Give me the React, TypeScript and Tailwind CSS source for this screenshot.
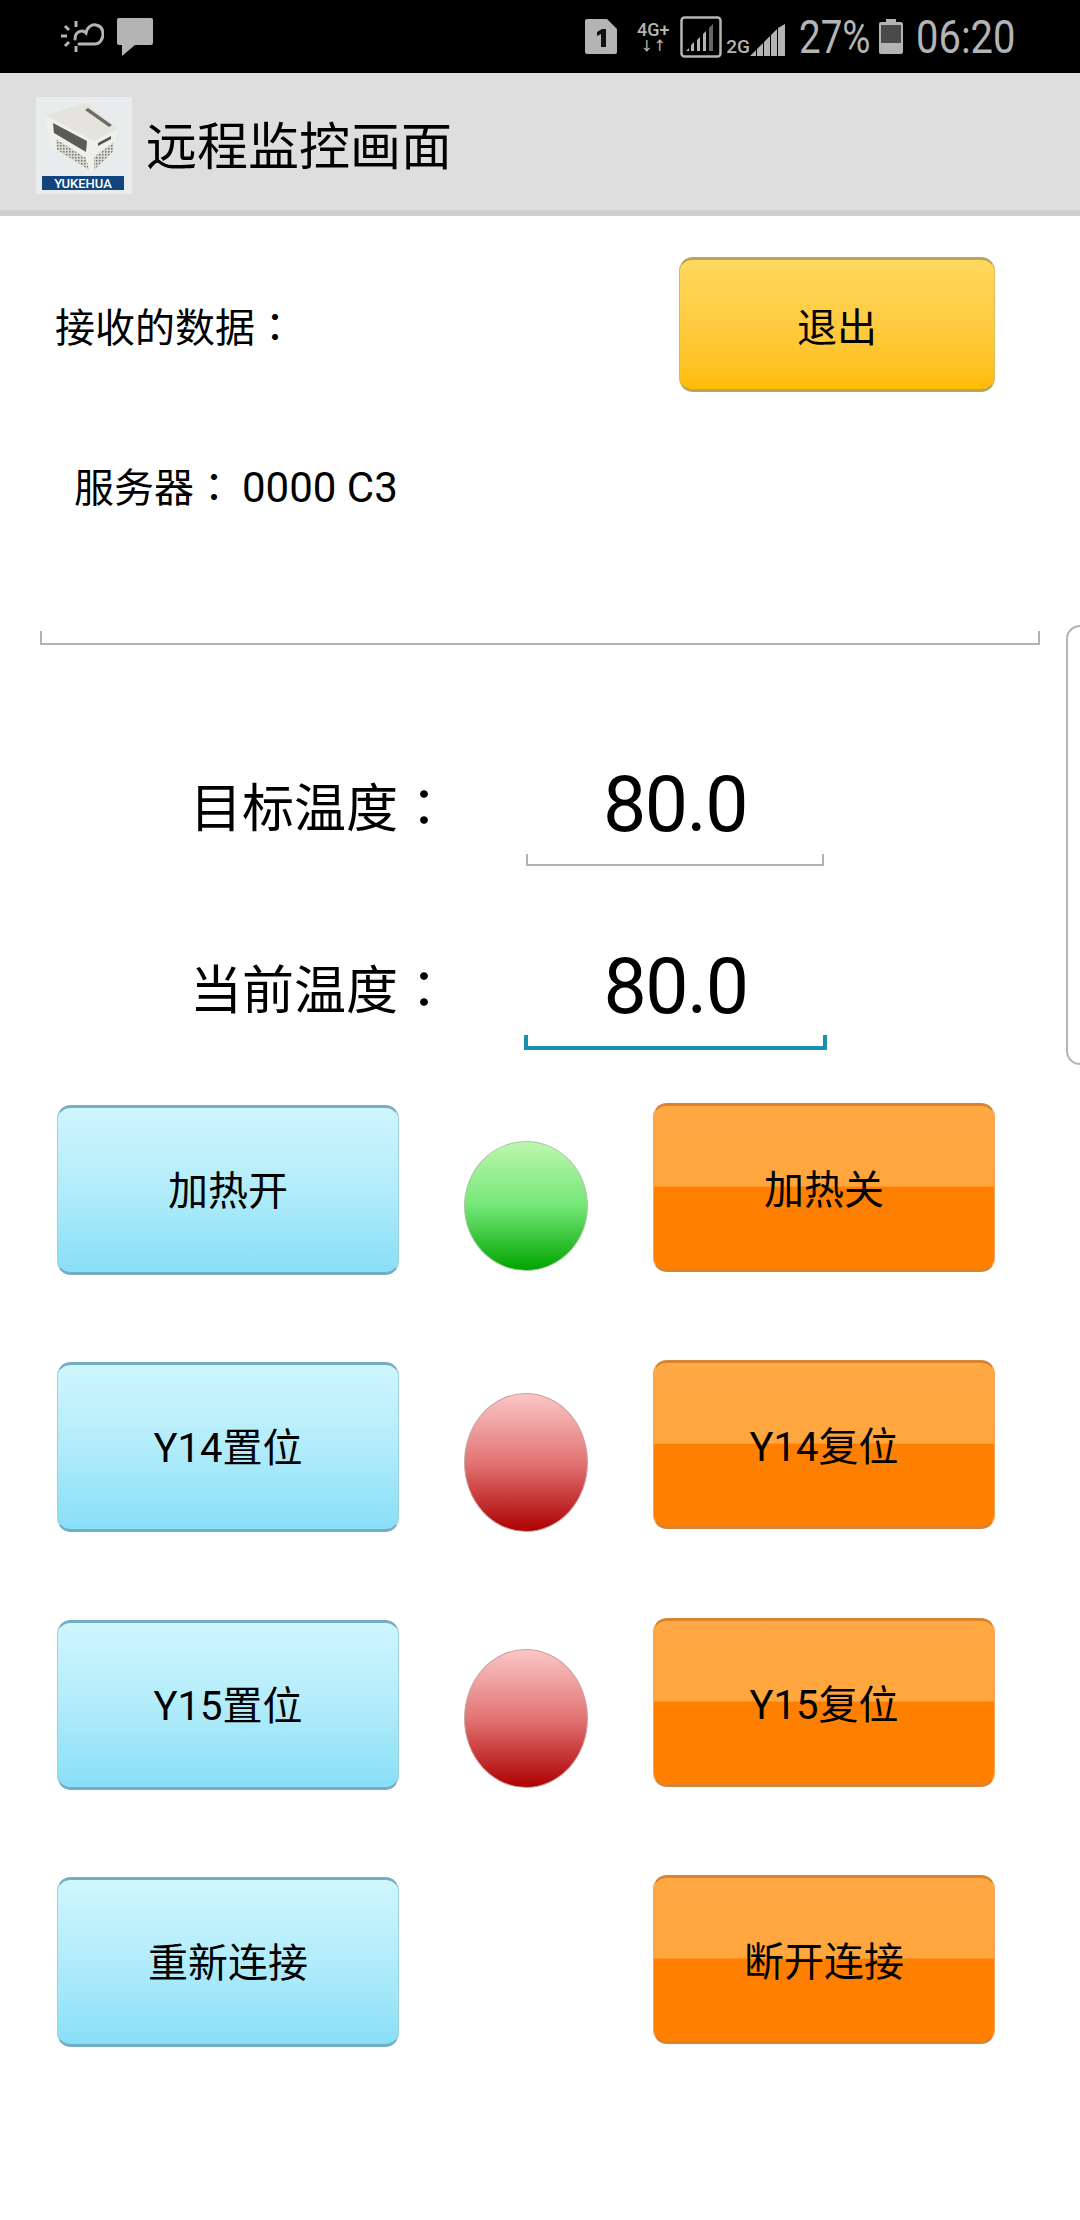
import React from "react";

const CJK = { fontFamily: '"Noto Sans CJK TC", sans-serif' };

// full-width colon sits centred in the reference, as in the TC glyph set
const Colon = () => <span style={CJK}>：</span>;

const SunCloudIcon = () => (
  <svg width="44" height="34" viewBox="0 0 44 34" fill="none" stroke="#b4b4b4" strokeWidth="3">
    <path d="M15 19c0-5 3-8 7-8 2 0 3 1 4 2 1-6 6-9 10-8 5 1 7 5 7 9 0 6-4 10-8 10H19" strokeLinecap="round" />
    <path d="M16 1v6M1 16h6M5 6l4 4M5 26l4-4M16 26v6" />
  </svg>
);

const BubbleIcon = () => (
  <svg width="36" height="38" viewBox="0 0 36 38">
    <path d="M2 0h32a2 2 0 0 1 2 2v23a2 2 0 0 1-2 2H18L5 38V27H2a2 2 0 0 1-2-2V2a2 2 0 0 1 2-2z" fill="#b4b4b4" />
  </svg>
);

const SimIcon = () => (
  <svg width="32" height="35" viewBox="0 0 32 35">
    <path d="M2 0h20l10 10v23a2 2 0 0 1-2 2H2a2 2 0 0 1-2-2V2a2 2 0 0 1 2-2z" fill="#b4b4b4" />
    <path d="M12 13l5-3h4v18h-5V15l-4 2z" fill="#111" />
  </svg>
);

const BoxSignalIcon = () => (
  <svg width="42" height="42" viewBox="0 0 42 42">
    <rect x="1.5" y="1.5" width="39" height="39" rx="3" fill="none" stroke="#b4b4b4" strokeWidth="2.5" />
    <path d="M6 35l3-3v3zM11 35v-6l3-3v9zM17 35V24l3-3v14zM23 35V18l3-3v20z" fill="#b4b4b4" />
    <path d="M29 35V12l4-4v27z" fill="#666" />
  </svg>
);

const SignalIcon = () => (
  <svg width="35" height="32" viewBox="0 0 35 32">
    <path d="M0 32l6-6v6zM7 32V25l6-6v13zM14 32V18l6-6v20zM21 32V11l6-6v27zM28 32V4l7-4v32z" fill="#b4b4b4" />
  </svg>
);

const BatteryIcon = () => (
  <svg width="24" height="35" viewBox="0 0 24 35">
    <path d="M7 0h10v3h5a2 2 0 0 1 2 2v28a2 2 0 0 1-2 2H2a2 2 0 0 1-2-2V5a2 2 0 0 1 2-2h5z" fill="#b4b4b4" />
    <rect x="2" y="6" width="20" height="18" fill="#4a4a4a" />
  </svg>
);

const PlcDrawing = () => (
  <svg width="96" height="97" viewBox="0 0 96 97" className="absolute left-0 top-0">
    <defs>
      <pattern id="vents" width="3" height="3" patternUnits="userSpaceOnUse">
        <rect width="3" height="3" fill="#d8d8d2" />
        <rect width="1.5" height="1.5" fill="#77776f" />
      </pattern>
    </defs>
    <path d="M9 18L50 6l32 26-3 22-24 22-40-26z" fill="#f0f0ea" />
    <path d="M9 18L50 6l32 26-24 12z" fill="#e4e4dc" />
    <path d="M52 11l24 17-3 2-24-17z" fill="#6d6b66" />
    <path d="M17 26l34 18-1 11-32-19z" fill="#5c5a56" />
    <path d="M20 42l30 19 3 12-32-20z" fill="url(#vents)" />
    <path d="M58 60l20-15-1 10-19 18z" fill="url(#vents)" />
    <path d="M62 46l13-7v3l-13 7z" fill="#55534f" />
  </svg>
);

const Lamp = ({ className }: { className: string }) => <div className={className} />;

const blueBtn =
  "mt-[2px] flex h-[170px] w-[342px] items-center justify-center rounded-[14px] border-x border-y-[3px] border-x-[#9ad2e0] border-y-[#74adc2] bg-[linear-gradient(180deg,#cff6fd_0%,#b2ecfa_50%,#88dff7_100%)] pt-[4px] text-[40px] text-black";
const orangeBtn =
  "flex h-[169px] w-[342px] items-center justify-center rounded-[14px] border-x border-y-[3px] border-x-[#f5a65a] border-y-[#d98430] bg-[linear-gradient(180deg,#ffa844_0%,#ffa63e_49%,#ff7f00_50%,#ff7f00_100%)] pt-[6px] text-[40px] text-black";
const greenLamp =
  "ml-[65px] mt-[38px] h-[130px] w-[124px] rounded-[50%] border border-[#a8c8a0] bg-[linear-gradient(180deg,#bdf7ae_0%,#74e676_50%,#00a400_100%)]";
const redLamp =
  "bg-[linear-gradient(180deg,#fbc6c6_0%,#e27474_50%,#ae0000_100%)] rounded-[50%] border border-[#c8a0a0] h-[139px] w-[124px] ml-[65px]";

const rows = [
  { left: "加热开", right: "加热关", lamp: greenLamp, top: "mt-[53px]" },
  { left: "Y14置位", right: "Y14复位", lamp: `${redLamp} mt-[33px]`, top: "mt-[85px]" },
  { left: "Y15置位", right: "Y15复位", lamp: `${redLamp} mt-[31px]`, top: "mt-[86px]" },
  { left: "重新连接", right: "断开连接", lamp: "ml-[65px] w-[124px]", top: "mt-[85px]" },
];

export default function App() {
  return (
    <div
      className="relative h-[2220px] w-[1080px] overflow-hidden bg-white text-black"
      style={{ fontFamily: 'Roboto, "Noto Sans CJK SC", sans-serif' }}
    >
      {/* status bar */}
      <div className="flex h-[73px] items-center bg-black pl-[60px] pr-[63px] text-[#b4b4b4]">
        <SunCloudIcon />
        <div className="ml-[13px]">
          <BubbleIcon />
        </div>
        <div className="ml-auto">
          <SimIcon />
        </div>
        <div className="ml-[16px] flex w-[40px] flex-col items-center">
          <span className="text-[18px] font-medium leading-[17px]">4G+</span>
          <span className="text-[13px] font-bold leading-[15px]">↓↑</span>
        </div>
        <div className="ml-[7px]">
          <BoxSignalIcon />
        </div>
        <span className="ml-[4px] mt-[20px] text-[19px] font-medium leading-[17px]">2G</span>
        <div className="mt-[6px]">
          <SignalIcon />
        </div>
        <span className="ml-[14px] w-[70px] origin-left scale-x-[0.82] text-[47px] font-normal leading-none">27%</span>
        <div className="ml-[10px]">
          <BatteryIcon />
        </div>
        <span className="ml-[13px] w-[101px] origin-left scale-x-[0.85] text-[47px] font-normal leading-none">06:20</span>
      </div>

      {/* app bar */}
      <div className="flex h-[143px] items-center border-b-[6px] border-[#cfcfcf] bg-[#dedede] pl-[36px] pt-[8px]">
        <div className="relative h-[97px] w-[96px] bg-[#e9ecec]">
          <PlcDrawing />
          <div className="absolute bottom-[4px] left-[6px] flex h-[14px] w-[82px] items-center justify-center bg-[#12457e] text-[13px] font-medium leading-none text-white">
            YUKEHUA
          </div>
        </div>
        <span className="ml-[14px] mt-[4px] text-[51px] leading-none">远程监控画面</span>
      </div>

      {/* received data */}
      <div className="mt-[41px] flex items-center pl-[55px]">
        <span className="mt-[5px] text-[40px] leading-[56px]">
          接收的数据
          <Colon />
        </span>
        <button className="ml-auto mr-[85px] flex h-[135px] w-[316px] items-center justify-center rounded-[14px] border-x border-y-[3px] border-x-[#d8bc5c] border-y-[#b5a75e] bg-gradient-to-b from-[#ffd95e] to-[#ffbd00] pt-[8px] text-[40px]">
          退出
        </button>
      </div>
      <div className="mt-[65px] pl-[74px] text-[40px] leading-[56px]">
        服务器
        <Colon />
        <span className="ml-[8px] text-[42px]">0000 C3</span>
      </div>
      <div className="ml-[40px] mt-[114px] h-[14px] w-[1000px] border-x-2 border-b-2 border-[#b2b2b2]" />

      {/* temperatures */}
      <div className="mt-[120px] flex pl-[190px]">
        <span className="w-[336px] text-[52px] leading-[80px]">
          目标温度
          <Colon />
        </span>
        <div className="w-[298px]">
          <div className="text-center text-[77px] leading-[80px] tracking-[-1.5px]">80.0</div>
          <div className="mt-[9px] h-[12px] border-x-2 border-b-2 border-[#b2b2b2]" />
        </div>
      </div>
      <div className="mt-[81px] flex pl-[190px]">
        <span className="w-[334px] text-[52px] leading-[80px]">
          当前温度
          <Colon />
        </span>
        <div className="w-[303px]">
          <div className="text-center text-[77px] leading-[80px] tracking-[-1.5px]">80.0</div>
          <div className="mt-[8px] h-[15px] border-x-[4px] border-b-[4px] border-[#1a8fae]" />
        </div>
      </div>

      {/* control rows */}
      {rows.map((row) => (
        <div key={row.left} className={`flex items-start pl-[57px] ${row.top}`}>
          <button className={blueBtn}>{row.left}</button>
          <Lamp className={row.lamp} />
          <button className={`${orangeBtn} ml-[65px]`}>{row.right}</button>
        </div>
      ))}

      {/* edge panel handle */}
      <div className="absolute right-0 top-[625px] h-[440px] w-[14px] rounded-l-[16px] border-y-2 border-l-2 border-[#b4b4b4] bg-white" />
    </div>
  );
}
